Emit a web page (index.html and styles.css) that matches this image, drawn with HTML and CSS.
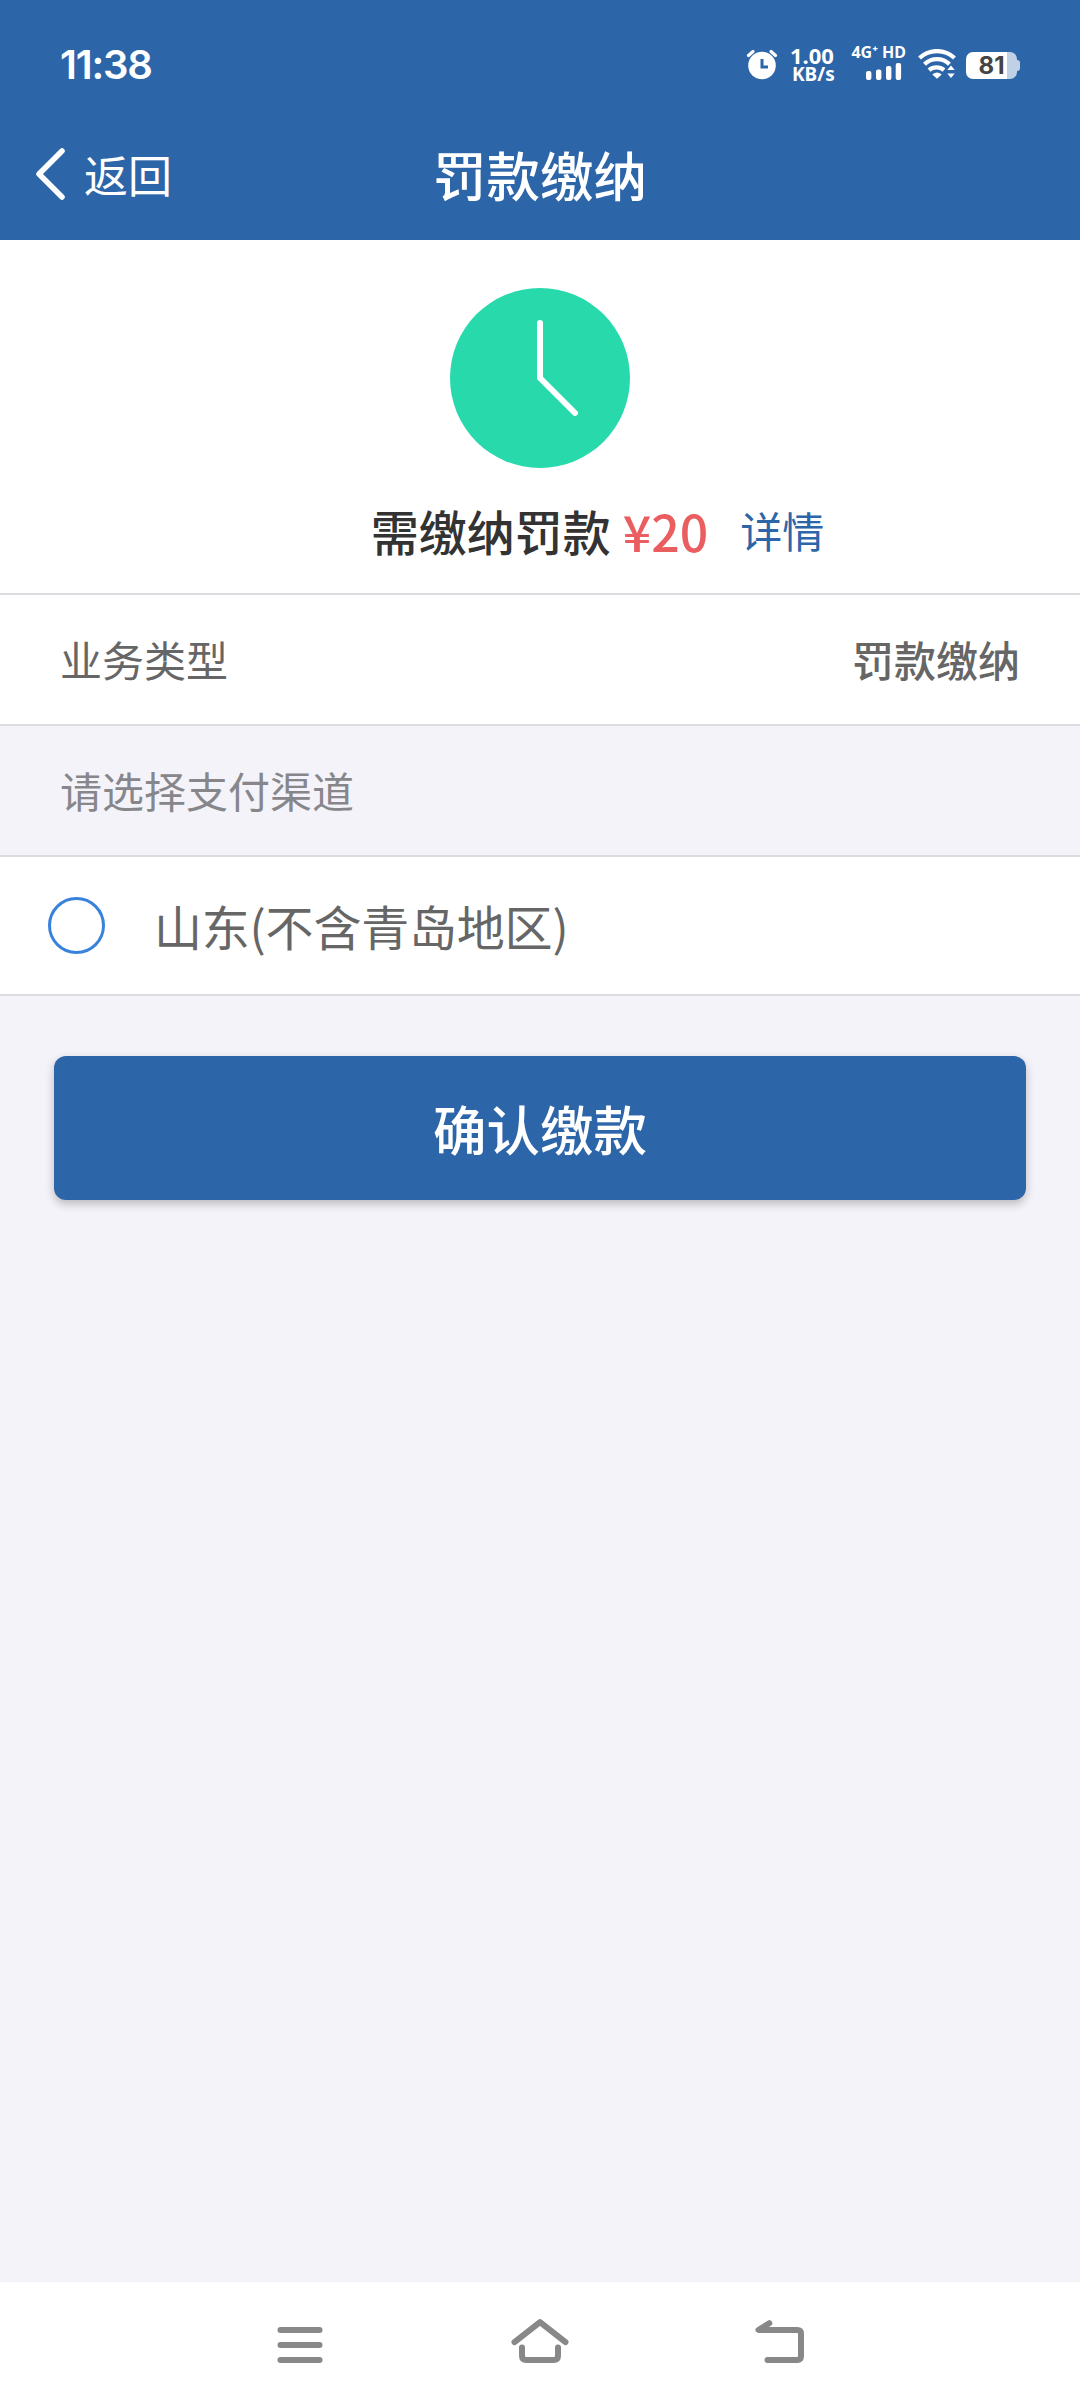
FILE: index.html
```html
<!DOCTYPE html>
<html lang="zh-CN">
<head>
<meta charset="utf-8">
<title>罚款缴纳</title>
<link rel="stylesheet" href="styles.css">
</head>
<body>
<div class="app">
  <header class="top">
    <div class="status">
      <span class="time">11:38</span>
      <div class="indicators">
        <svg class="alarm" width="32" height="32" viewBox="0 0 32 32">
          <circle cx="16" cy="17.500" r="13.800" fill="#fff"/>
          <path d="M2.500 7.500 7 3.500M29.500 7.500 25 3.500" stroke="#fff" stroke-width="3.200" stroke-linecap="round"/>
          <path d="M16 11v8h6" fill="none" stroke="#2d65a9" stroke-width="3"/>
        </svg>
        <div class="speed"><span class="rate">1.00</span><span class="unit">KB/s</span></div>
        <div class="cell">
          <span class="net">4G⁺ HD</span>
          <svg width="36" height="17" viewBox="0 0 36 17" fill="#fff">
            <rect x="0" y="8" width="5.400" height="9" rx="2"/>
            <rect x="10" y="6.500" width="5.400" height="10.500" rx="2"/>
            <rect x="20" y="3" width="5.400" height="14" rx="2"/>
            <rect x="29.700" y="0" width="5.400" height="17" rx="2"/>
          </svg>
        </div>
        <svg class="wifi" width="38" height="30" viewBox="0 0 38 30">
          <g fill="none" stroke="#fff" stroke-width="4.200">
            <path d="M1.500 9a25.500 25.500 0 0 1 35 0"/>
            <path d="M6.500 15.200a18 18 0 0 1 25 0"/>
            <path d="M11 21.200a11.500 11.500 0 0 1 15 0"/>
          </g>
          <path d="M14.300 25.500a7.500 7.500 0 0 1 9.400 0L19 29.800z" fill="#fff"/>
          <path d="M33 14l6 8v8H27v-8z" fill="#2d65a9"/>
          <path d="M33 16.500l3.700 4.500h-7.400zM33 29l3.700-4.500h-7.400z" fill="#fff"/>
        </svg>
        <div class="battery"><span>81</span></div>
      </div>
    </div>
    <nav class="titlebar">
      <a class="back">
        <svg width="32" height="54" viewBox="0 0 32 54"><path d="M27 4 4 27l23 23" fill="none" stroke="#fff" stroke-width="5.500" stroke-linecap="round" stroke-linejoin="round"/></svg>
        <span>返回</span>
      </a>
      <h1>罚款缴纳</h1>
      <span></span>
    </nav>
  </header>

  <main>
    <section class="summary">
      <svg width="180" height="180" viewBox="0 0 180 180">
        <circle cx="90" cy="90" r="90" fill="#28d9ac"/>
        <path d="M90 35v55l35 35" fill="none" stroke="#fff" stroke-width="6" stroke-linecap="round" stroke-linejoin="round"/>
      </svg>
      <p class="due"><span>需缴纳罚款</span><strong>¥20</strong><a>详情</a></p>
    </section>
    <section class="row"><span>业务类型</span><span class="value">罚款缴纳</span></section>
    <section class="row caption"><span>请选择支付渠道</span></section>
    <label class="option"><span class="radio"></span><span class="region">山东(不含青岛地区)</span></label>
    <button class="submit">确认缴款</button>
  </main>

  <footer class="sysnav">
    <svg width="46" height="38" viewBox="0 0 46 38"><path d="M3.500 4h39M3.500 19h39M3.500 34h39"/></svg>
    <svg width="60" height="46" viewBox="-1 4.300 60 46"><path d="M4.500 24.500 30 4.500l25.500 20M12 29.700V38q0 4.300 4.300 4.300h27.400q4.300 0 4.300-4.300v-8.300"/></svg>
    <svg width="50" height="46" viewBox="0 4.300 50 46"><path d="M14.300 5.500 3.500 12.300H42.300q3.700 0 3.700 3.700v22.600q0 3.700-3.700 3.700H12.500"/></svg>
  </footer>
</div>
</body>
</html>
```
FILE: styles.css
```css
* { box-sizing: border-box; }
body {
  margin: 0;
  background: #f3f3f9;
  color: #666;
  font-family: "Noto Sans CJK SC", sans-serif;
}
svg { display: block; flex: none; }
.app {
  display: flex;
  flex-direction: column;
  width: 1080px;
  height: 2408px;
}
.top { height: 240px; background: #2d65a9; color: #fff; }
.status {
  display: flex;
  justify-content: space-between;
  align-items: center;
  height: 128px;
  padding: 0 63px 0 60px;
  font-family: Inter, "Noto Sans", sans-serif;
}
.time { font-size: 40px; font-weight: 600; letter-spacing: -1.2px; }
.indicators { display: flex; height: 40px; align-items: flex-start; }
.alarm { margin-top: 4px; margin-right: 12px; }
.speed {
  display: flex;
  flex-direction: column;
  width: 46px;
  margin-right: 13px;
  font-family: "Noto Sans", sans-serif;
  font-weight: 700;
}
.rate { height: 20px; font-size: 22px; line-height: 23px; }
.unit { height: 18px; font-size: 19px; line-height: 20px; padding-left: 2px; }
.cell { display: flex; flex-direction: column; align-items: flex-end; width: 57px; margin-right: 12px; }
.cell svg { margin-right: 4px; margin-top: 2px; }
.net { font-family: "Noto Sans", sans-serif; font-size: 16px; line-height: 17px; font-weight: 700; white-space: nowrap; }
.wifi { margin-top: 5px; margin-right: 10px; }
.battery {
  position: relative;
  display: flex;
  justify-content: center;
  align-items: center;
  width: 51px;
  height: 27px;
  margin-top: 8px;
  border-radius: 7px;
  background: linear-gradient(90deg, #fff 41px, #c0d1e5 41px);
  color: #444;
  font-size: 24px;
  font-weight: 700;
}
.battery::after {
  content: "";
  position: absolute;
  left: 51px;
  top: 8px;
  width: 3px;
  height: 11px;
  border-radius: 0 3px 3px 0;
  background: #c0d1e5;
}
.titlebar {
  display: grid;
  grid-template-columns: 1fr auto 1fr;
  align-items: center;
  height: 92px;
  padding: 0 35px;
}
.back { display: flex; align-items: center; gap: 17px; font-size: 44px; line-height: 60px; }
h1 { margin: 0; font-size: 53.5px; line-height: 70px; font-weight: 500; }
main { flex: 1; }
.summary {
  display: flex;
  flex-direction: column;
  align-items: center;
  height: 355px;
  padding-top: 48px;
  background: #fff;
  border-bottom: 2px solid #dcdce0;
}
.due {
  display: flex;
  align-items: center;
  margin: 26px 0 0;
  padding-left: 115px;
  color: #333;
  font-size: 48px;
  line-height: 72px;
  font-weight: 500;
}
.due strong { margin-left: 12px; color: #ea5e60; font-size: 50px; font-weight: 500; }
.due a { margin-left: 32px; color: #2d65a9; font-size: 42px; font-weight: 400; }
.row {
  display: flex;
  justify-content: space-between;
  align-items: center;
  height: 131px;
  padding: 0 60px 2px;
  background: #fff;
  border-bottom: 2px solid #dcdce0;
  font-size: 42px;
}
.value { font-weight: 500; }
.caption { background: #f3f3f9; color: #87878b; }
.option {
  display: flex;
  align-items: center;
  height: 139px;
  padding: 0 48px;
  gap: 49px;
  background: #fff;
  border-bottom: 2px solid #dcdce0;
  font-size: 48px;
}
.region { padding-bottom: 2px; letter-spacing: -0.2px; }
.radio { width: 57px; height: 57px; border: 3px solid #3982dc; border-radius: 50%; }
.submit {
  display: block;
  width: 972px;
  height: 144px;
  margin: 60px auto 0;
  padding: 0 0 2px;
  border: 0;
  border-radius: 12px;
  background: #2d65a9;
  box-shadow: 0 4px 10px rgba(0, 0, 0, .24);
  color: #fff;
  font: 500 53.5px "Noto Sans CJK SC", sans-serif;
}
.sysnav {
  display: flex;
  justify-content: center;
  align-items: center;
  gap: 186px;
  height: 126px;
  padding-left: 2px;
  background: #fff;
}
.sysnav svg { overflow: visible; }
.sysnav path { fill: none; stroke: #888; stroke-width: 6; stroke-linecap: round; stroke-linejoin: round; }
```
